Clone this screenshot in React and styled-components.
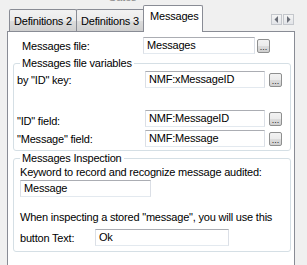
import React from "react";
import styled, { createGlobalStyle, css } from "styled-components";

const GlobalStyle = createGlobalStyle`
  html, body { margin: 0; padding: 0; background: #f0f0f0; }
  body {
    font-family: "Liberation Sans", Arial, sans-serif;
    font-size: 11px;
    letter-spacing: -0.2px;
    color: #000;
  }
`;

const Frame = styled.div`
  width: 307px;
  height: 265px;
  overflow: hidden;
  background: #f0f0f0;
  display: flex;
  flex-direction: column;
`;

const CutStrip = styled.div`
  height: 4px;
  overflow: hidden;
  padding-left: 108px;
  color: #8a8a8a;
  font-size: 11px;
  line-height: 11px;
`;

const CutText = styled.div`
  margin-top: -8px;
`;

const TabBar = styled.div`
  height: 27px;
  display: flex;
  align-items: flex-end;
  padding-left: 9px;
  padding-right: 13px;
`;

const Tab = styled.div`
  position: relative;
  box-sizing: border-box;
  height: 22px;
  width: ${(p) => p.$w}px;
  border: 1px solid #898c95;
  border-bottom: none;
  border-radius: 2px 2px 0 0;
  margin-right: -1px;
  background: linear-gradient(#f2f2f2, #ebebeb 50%, #dddddd 51%, #cfcfcf);
  display: flex;
  align-items: center;
  padding-left: 4px;
  font-size: 11px;
  ${(p) =>
    p.$active &&
    css`
      height: 27px;
      margin-bottom: -1px;
      margin-left: -2px;
      background: #fff;
      z-index: 1;
      padding-left: 6px;
      align-items: flex-start;
      padding-top: 4px;
    `}
`;

const Spacer = styled.div`
  flex: 1;
`;

const Scrollers = styled.div`
  display: flex;
  gap: 1px;
  align-self: flex-start;
  margin-top: 10px;
`;

const ScrollBtn = styled.div`
  box-sizing: border-box;
  width: 11px;
  height: 11px;
  border: 1px solid #c4c7cc;
  background: linear-gradient(#f4f4f4, #e2e4e8);
  display: flex;
  align-items: center;
  justify-content: center;
`;

const Panel = styled.div`
  box-sizing: border-box;
  margin-left: 7px;
  width: 288px;
  flex: 1;
  border: 1px solid #898c95;
  border-bottom: none;
  background: #fff;
  padding: 5px 3px 0 5px;
`;

const Row = styled.div`
  display: flex;
  align-items: center;
  height: 17px;
  padding-left: ${(p) => p.$indent || 0}px;
  margin-top: ${(p) => p.$top || 0}px;
`;

const Label = styled.div`
  width: ${(p) => p.$w}px;
  flex: none;
  padding-top: ${(p) => p.$dy || 0}px;
`;

const Input = styled.div`
  box-sizing: border-box;
  width: ${(p) => p.$w}px;
  height: 17px;
  flex: none;
  border: 1px solid #dbdfe6;
  border-top-color: #abadb3;
  border-bottom-color: #e3e9ef;
  background: #fff;
  padding-left: 3px;
  line-height: 15px;
  white-space: nowrap;
  overflow: hidden;
`;

const Ellipsis = styled.div`
  box-sizing: border-box;
  width: 13px;
  height: 14px;
  flex: none;
  margin-left: ${(p) => p.$gap}px;
  border: 1px solid #8e8f8f;
  border-radius: 2px;
  background: linear-gradient(#f2f2f2, #ebebeb 50%, #dddddd 51%, #cfcfcf);
  font-size: 9px;
  line-height: 14px;
  text-align: center;
  letter-spacing: 0;
  color: #222;
`;

const Group = styled.fieldset`
  margin: ${(p) => p.$top}px 0 0 0;
  width: 278px;
  box-sizing: border-box;
  border: 1px solid #d5dfe5;
  border-radius: 3px;
  padding: 0 3px ${(p) => p.$bottom}px 3px;
  min-width: 0;
`;

const Legend = styled.legend`
  padding: 0 2px;
  margin-left: 3px;
  line-height: 13px;
  font-size: 11px;
`;

const TextLine = styled.div`
  line-height: 13px;
  padding-left: 3px;
  margin-top: ${(p) => p.$top || 0}px;
  white-space: nowrap;
`;

const Arrow = ({ dir }) => (
  <svg width="5" height="7" viewBox="0 0 5 7">
    {dir === "left" ? (
      <polygon points="4,0 4,7 0.5,3.5" fill="#6b6f78" />
    ) : (
      <polygon points="1,0 1,7 4.5,3.5" fill="#6b6f78" />
    )}
  </svg>
);

export default function App() {
  return (
    <>
      <GlobalStyle />
      <Frame>
        <CutStrip>
          <CutText>Gates</CutText>
        </CutStrip>
        <TabBar>
          <Tab $w={68}>Definitions 2</Tab>
          <Tab $w={70}>Definitions 3</Tab>
          <Tab $w={60} $active>Messages</Tab>
          <Spacer />
          <Scrollers>
            <ScrollBtn>
              <Arrow dir="left" />
            </ScrollBtn>
            <ScrollBtn>
              <Arrow dir="right" />
            </ScrollBtn>
          </Scrollers>
        </TabBar>
        <Panel>
          <Row $indent={9}>
            <Label $w={121}>Messages file:</Label>
            <Input $w={112}>Messages</Input>
            <Ellipsis $gap={2}>...</Ellipsis>
          </Row>
          <Group $top={3} $bottom={3}>
            <Legend>Messages file variables</Legend>
            <Row $top={1}>
              <Label $w={128}>by "ID" key:</Label>
              <Input $w={120}>NMF:xMessageID</Input>
              <Ellipsis $gap={4}>...</Ellipsis>
            </Row>
            <Row $top={22}>
              <Label $w={128} $dy={4}>"ID" field:</Label>
              <Input $w={120}>NMF:MessageID</Input>
              <Ellipsis $gap={4}>...</Ellipsis>
            </Row>
            <Row $top={3}>
              <Label $w={128}>"Message" field:</Label>
              <Input $w={120}>NMF:Message</Input>
              <Ellipsis $gap={4}>...</Ellipsis>
            </Row>
          </Group>
          <Group $top={1} $bottom={5}>
            <Legend>Messages Inspection</Legend>
            <TextLine $top={1}>Keyword to record and recognize message audited:</TextLine>
            <Row $indent={3} $top={1}>
              <Input $w={131}>Message</Input>
            </Row>
            <TextLine $top={14}>
              When inspecting a stored "message", you will use this
            </TextLine>
            <Row $indent={3} $top={5}>
              <Label $w={75}>button Text:</Label>
              <Input $w={134}>Ok</Input>
            </Row>
          </Group>
        </Panel>
      </Frame>
    </>
  );
}
